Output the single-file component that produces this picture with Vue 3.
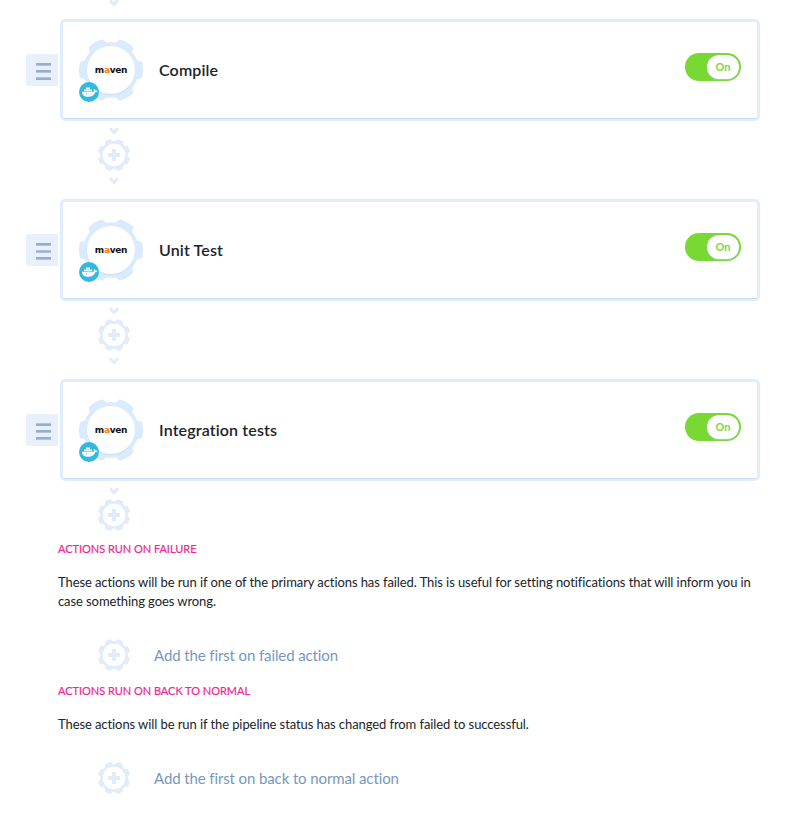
<script setup>
const actions = ['Compile', 'Unit Test', 'Integration tests']

// Closed outline of a cog with evenly spaced teeth around the origin.
function cog(teeth, outer, rim, topHalf, baseHalf, offset) {
  const at = (r, deg) => {
    const a = (deg * Math.PI) / 180
    return `${(r * Math.cos(a)).toFixed(2)} ${(r * Math.sin(a)).toFixed(2)}`
  }
  let d = ''
  for (let i = 0; i < teeth; i++) {
    const c = offset + (i * 360) / teeth
    const next = c + 360 / teeth
    d += `${i ? 'L' : 'M'}${at(rim, c - baseHalf)}L${at(outer, c - topHalf)}`
    d += `A${outer} ${outer} 0 0 1 ${at(outer, c + topHalf)}L${at(rim, c + baseHalf)}`
    d += `A${rim} ${rim} 0 0 1 ${at(rim, next - baseHalf)}`
  }
  return d + 'Z'
}
const bigCog = cog(6, 32, 27.8, 14.5, 20, 0)
const smallCog = cog(8, 16.3, 13.9, 11, 16, 22.5)
const chevron = 'M2 1.300 6 5.500 10 1.300'
const plus = 'M-2-6h4v4h4v4H2v4h-4V2h-4v-4h4Z'
const sections = [
  {
    title: 'Actions run on failure',
    text: 'These actions will be run if one of the primary actions has failed. This is useful for setting notifications that will inform you in case something goes wrong.',
    add: 'Add the first on failed action'
  },
  {
    title: 'Actions run on back to normal',
    text: 'These actions will be run if the pipeline status has changed from failed to successful.',
    add: 'Add the first on back to normal action'
  }
]
</script>

<template>
  <main class="pipeline">
    <div class="lead">
      <svg class="chevron" viewBox="0 0 12 8"><path :d="chevron" /></svg>
    </div>
    <template v-for="(name, i) in actions" :key="name">
      <div class="row">
        <button class="handle" aria-label="Reorder"><i></i><i></i><i></i></button>
        <article class="card">
          <div class="logo">
            <svg class="gear" viewBox="-32 -32 64 64"><path :d="bigCog" /></svg>
            <div class="disc"></div>
            <span class="maven">m<b>a</b>ven</span>
            <svg class="docker" viewBox="0 0 20 20">
              <circle cx="10" cy="10" r="10" fill="#35b8de" />
              <path fill="#fff" d="M3 9.700h11.700c.5-.5.5-1.400 0-2.200l.6-.6c.7.5 1 1.100 1.100 1.700.8-.1 1.500 0 2 .4-.4.9-1.200 1.200-2.200 1.200-1 2.900-3.200 4.500-6.700 4.500C5.300 14.700 3 13 3 9.700Z" />
              <path fill="#fff" d="M5 7.500h1.800v1.700H5zM7.100 7.500h1.800v1.700H7.100zM9.200 7.500H11v1.700H9.200zM11.300 7.500h1.800v1.700h-1.800zM7.100 5.500h1.800v1.700H7.100zM9.200 5.500H11v1.700H9.200z" />
              <circle cx="7.500" cy="11.800" r=".6" fill="#35b8de" />
            </svg>
          </div>
          <h2>{{ name }}</h2>
          <div class="toggle"><span>On</span></div>
        </article>
      </div>
      <div class="connector" :class="{ last: i === actions.length - 1 }">
        <svg class="chevron" viewBox="0 0 12 8"><path :d="chevron" /></svg>
        <svg class="plus" viewBox="-17 -17 34 34">
          <path :d="smallCog" /><circle r="11.300" /><path :d="plus" />
        </svg>
        <svg v-if="i < actions.length - 1" class="chevron" viewBox="0 0 12 8"><path :d="chevron" /></svg>
      </div>
    </template>
    <section v-for="s in sections" :key="s.title">
      <h3>{{ s.title }}</h3>
      <p>{{ s.text }}</p>
      <a class="add">
        <svg class="plus" viewBox="-17 -17 34 34">
          <path :d="smallCog" /><circle r="11.300" /><path :d="plus" />
        </svg>
        <span>{{ s.add }}</span>
      </a>
    </section>
  </main>
</template>

<style>
body { margin: 0; background: #fff; }
</style>

<style scoped>
.pipeline { box-sizing: border-box; width: 802px; height: 817px; overflow: hidden; font-family: Lato, sans-serif; color: #202329; }
svg { display: block; flex: none; }
.lead { height: 19px; padding-left: 97px; width: 34px; display: flex; justify-content: center; overflow: hidden; }
.lead .chevron { margin-top: -1px; }
.chevron { width: 12px; height: 8px; }
.chevron path { fill: none; stroke: #e0ecfa; stroke-width: 3; }
.row { display: flex; align-items: center; height: 102px; padding-left: 26px; }
.handle { display: flex; flex-direction: column; gap: 4px; box-sizing: border-box; width: 32px; height: 32px; margin: 0 2px 0 0; padding: 9px 0 0 10px; border: 0; border-radius: 3px 0 0 3px; background: #e8f1fb; }
.handle i { width: 15px; height: 3px; background: linear-gradient(#b4c3dc 0 0.5px, #98acd0 0.5px 2.5px, #b4c3dc 2.5px); }
.card { display: flex; align-items: center; box-sizing: border-box; width: 700px; height: 102px; padding: 0 16px; border: 3px solid #e0edfc; border-bottom-width: 2px; border-radius: 5px; background: #fff; box-shadow: inset 0 -1px 0 #c8dcf4; }
.logo { position: relative; display: grid; place-items: center; width: 64px; height: 64px; margin-bottom: 1px; }
.gear { grid-area: 1 / 1; width: 64px; height: 64px; fill: #dbebfe; }
.disc { grid-area: 1 / 1; width: 48px; height: 48px; border-radius: 50%; background: #fff; box-shadow: 0 1px 1px #c9dcf6; }
.maven { grid-area: 1 / 1; z-index: 1; font: bold 9px/12px "DejaVu Sans", sans-serif; letter-spacing: -0.3px; color: #111; }
.maven b { color: #ff7a21; }
.docker { position: absolute; left: 0; bottom: 0; width: 20px; height: 20px; }
h2 { margin: 0 0 2px 16px; font-size: 16px; line-height: 20px; font-weight: 600; flex: 1; font-variant-ligatures: none; letter-spacing: 0.14px; }
.toggle { display: flex; justify-content: flex-end; box-sizing: border-box; width: 56px; height: 28px; margin: -7px 0 0; padding: 2px; border-radius: 14px; background: #7ad834; }
.toggle span { width: 32px; height: 24px; border-radius: 12px; background: #fff; box-shadow: 0 1px 1px #a5c7c0; color: #84d548; font-size: 11px; line-height: 24px; font-weight: 700; text-align: center; }
.connector { display: flex; flex-direction: column; align-items: center; width: 34px; height: 78px; padding-left: 97px; box-sizing: content-box; }
.connector .chevron:first-child { margin-top: 6px; }
.connector .plus { margin: 3px 0 5px; }
.connector.last { height: 59px; }
.plus { width: 34px; height: 34px; fill: #e0ecfa; }
.plus circle { fill: #fff; }
section { width: 700px; padding-left: 58px; }
h3 { margin: 0; padding-top: 1px; font-size: 11px; line-height: 16px; font-weight: 400; color: #ee2a90; text-transform: uppercase; letter-spacing: -0.03px; -webkit-text-stroke: 0.2px #ee2a90; }
p { margin: 16px 0 27px; font-size: 13px; line-height: 19px; letter-spacing: -0.085px; }
.add { display: flex; align-items: center; height: 34px; gap: 23px; padding-left: 39px; margin-bottom: 10px; color: #7797c0; font-size: 15px; line-height: 20px; letter-spacing: -0.11px; }
</style>
